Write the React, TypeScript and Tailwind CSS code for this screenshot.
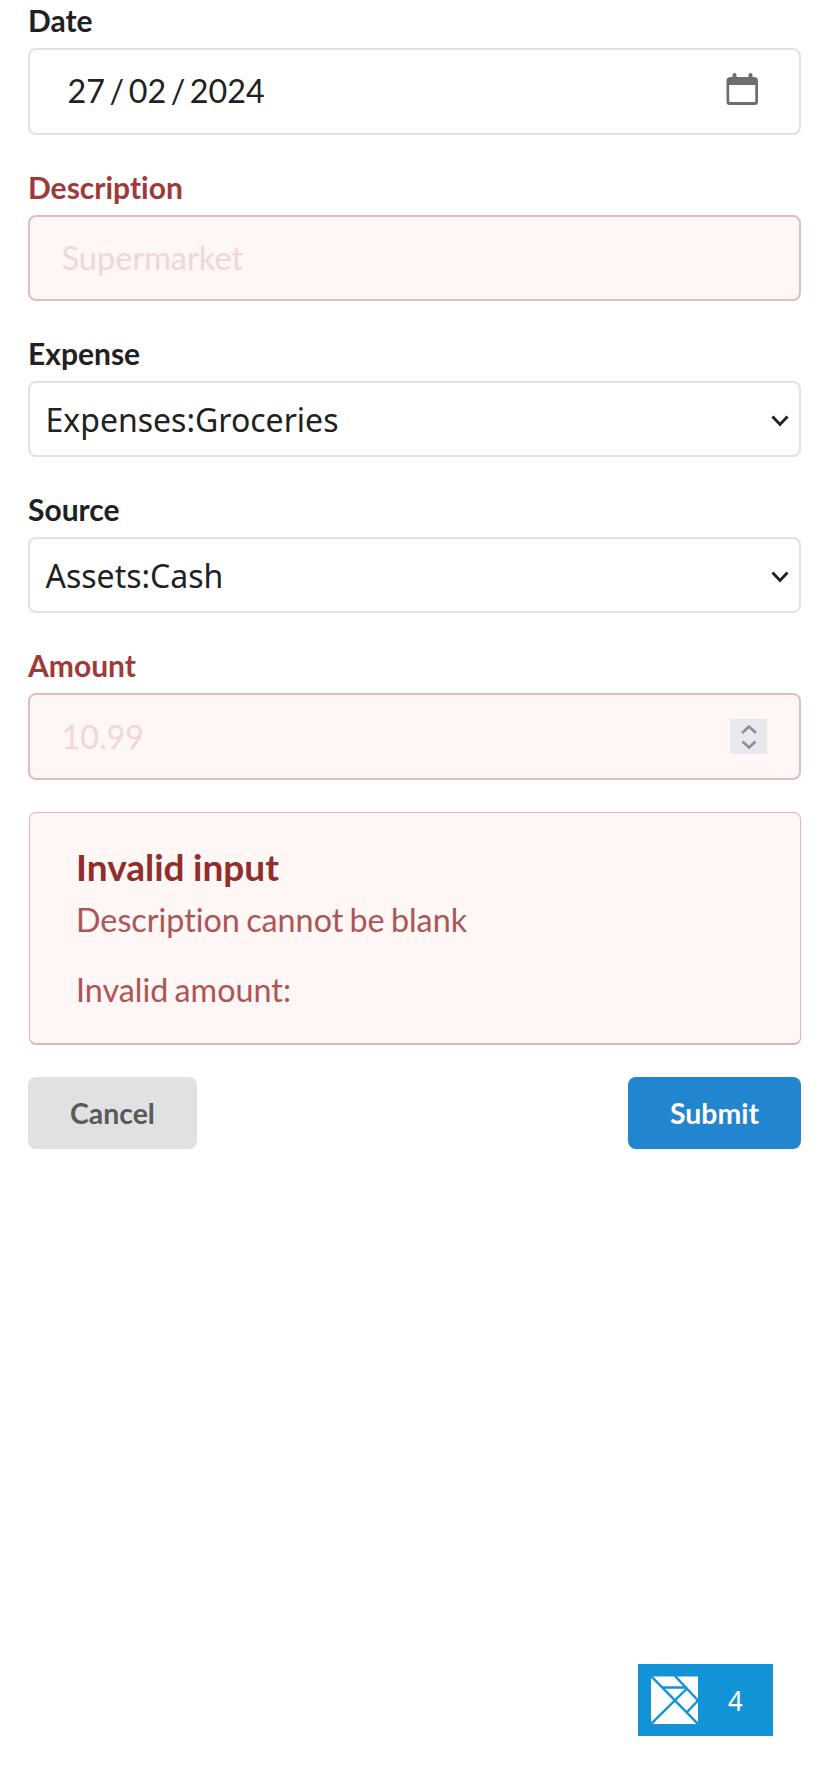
import type { ReactNode } from "react";

function Label({ children, error }: { children: ReactNode; error?: boolean }) {
  return (
    <label
      className={
        "block h-[30px] text-[30px] leading-[30px] font-bold " +
        (error ? "text-[#9f3a38]" : "text-[#212121]")
      }
    >
      {children}
    </label>
  );
}

function Chevron() {
  return (
    <svg className="mt-[3px] h-[12px] w-[18px]" viewBox="0 0 18 12" fill="none">
      <path d="M1.5 1.5L9 9.5L16.5 1.5" stroke="#212121" strokeWidth="2.9" />
    </svg>
  );
}

function Select({ children }: { children: ReactNode }) {
  return (
    <div className="mt-[13px] flex h-[76px] items-center justify-between rounded-[8px] border-2 border-[#e2e2e3] bg-white pr-[10px] pl-[15.5px] font-['Noto_Sans',sans-serif] text-[32px] leading-[40px] text-[#212121]">
      <span className="mt-[2px]">{children}</span>
      <Chevron />
    </div>
  );
}

function DatePart({ children }: { children: ReactNode }) {
  return <span>{children}</span>;
}

function Slash() {
  return <span className="w-[23.7px] text-center">/</span>;
}

export default function App() {
  return (
    <main className="flex h-[1792px] w-[830px] flex-col bg-white pt-[5px] pr-[29px] pl-[28px] font-[Lato,sans-serif] [font-variant-ligatures:none]">
      <div>
        <Label>Date</Label>
        <div className="mt-[13px] flex h-[87px] items-center justify-between rounded-[8px] border-2 border-[#e2e2e3] bg-white pr-[41px] pl-[37.5px] text-[32.3px] leading-[40px] text-[#212121]">
          <div className="mb-[2px] flex">
            <DatePart>27</DatePart>
            <Slash />
            <DatePart>02</DatePart>
            <Slash />
            <DatePart>2024</DatePart>
          </div>
          <svg className="mb-[5px] h-[32px] w-[32px]" viewBox="0 0 32 32" fill="#6e6e6e">
            <path
              fillRule="evenodd"
              d="M6.500 4V2a2 2 0 0 1 4 0v2H22.500V2a2 2 0 0 1 4 0v2h1.500a4 4 0 0 1 4 4V29a3 3 0 0 1-3 3H3.500a3 3 0 0 1-3-3V8a4 4 0 0 1 4-4ZM3.200 12V28a1 1 0 0 0 1 1H28.300a1 1 0 0 0 1-1V12Z"
            />
          </svg>
        </div>
      </div>

      <div className="mt-[37px]">
        <Label error>Description</Label>
        <div className="mt-[13px] flex h-[86px] items-center rounded-[8px] border-2 border-[#e3bcbd] bg-[#fff6f6] pl-[31.5px] text-[32.5px] leading-[40px] text-[#f1d6d6]">
          Supermarket
        </div>
      </div>

      <div className="mt-[37px]">
        <Label>Expense</Label>
        <Select>Expenses:Groceries</Select>
      </div>

      <div className="mt-[37px]">
        <Label>Source</Label>
        <Select>Assets:Cash</Select>
      </div>

      <div className="mt-[37px]">
        <Label error>Amount</Label>
        <div className="mt-[13px] flex h-[87px] items-center justify-between rounded-[8px] border-2 border-[#e3bcbd] bg-[#fff6f6] pr-[32px] pl-[31.5px] text-[32.3px] leading-[40px] text-[#f1d6d6]">
          <span>10.99</span>
          <div className="flex h-[35px] w-[37px] items-center justify-center bg-[#e9e9ed]">
            <svg className="h-[24px] w-[16px]" viewBox="0 0 16 24" fill="none" stroke="#8f8f9d" strokeWidth="2.7">
              <path d="M1 8L8 1.500L15 8M1.500 16.500L8 22.500L14.500 16.500" />
            </svg>
          </div>
        </div>
      </div>

      <section className="mt-[32px] ml-px h-[233px] rounded-[7px] border border-b-2 border-[#e0b4b4] bg-[#fff6f6] pt-[33px] pl-[46px]">
        <h2 className="text-[37px] leading-[41px] font-bold text-[#912d2b] [word-spacing:-0.5px]">Invalid input</h2>
        <div className="mt-[10px] flex flex-col gap-[24px] text-[32.3px] leading-[46px] text-[#ad5554] [word-spacing:-2px]">
          <p>Description cannot be blank</p>
          <p>Invalid amount:</p>
        </div>
      </section>

      <div className="mt-[32px] flex justify-between text-[28.4px] leading-[32px] font-bold">
        <button className="h-[72px] w-[169px] rounded-[8px] bg-[#e0e1e2] text-[#595959]">Cancel</button>
        <button className="h-[72px] w-[173px] rounded-[8px] bg-[#2185d0] text-white">Submit</button>
      </div>

      <div className="mt-auto mr-[28px] mb-[56px] flex h-[72px] w-[135px] items-center self-end bg-[#1293d8] pl-[13px] text-white">
        <svg className="h-[48px] w-[47px]" viewBox="0 0 47 48">
          <rect y="0.5" width="47" height="47.5" fill="#fff" />
          <path
            d="M0 0L47 48M0 48L36 12.500M24 0L47 24.500M11 11.500H36M47 24.500L36 36"
            fill="none"
            stroke="#1293d8"
            strokeWidth="2.4"
          />
        </svg>
        <span className="ml-[30px] font-['Noto_Sans',sans-serif] text-[27.7px] leading-[36px]">
          <span className="inline-block origin-left scale-x-[0.93]">4</span>
        </span>
      </div>
    </main>
  );
}
